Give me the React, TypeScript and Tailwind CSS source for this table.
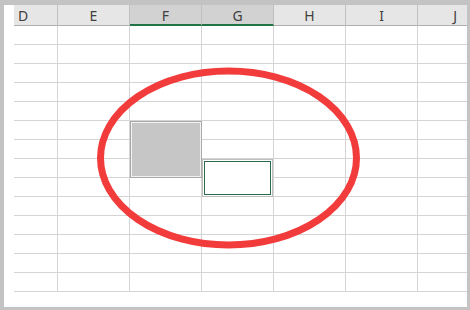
import React from "react";

const cols = [
  { label: "D", w: 44, sel: false, border: true, align: "justify-start pl-[4px]" },
  { label: "E", w: 72, sel: false, border: true, align: "justify-center" },
  { label: "F", w: 72, sel: true, border: true, align: "justify-center" },
  { label: "G", w: 72, sel: true, border: true, align: "justify-center" },
  { label: "H", w: 72, sel: false, border: true, align: "justify-center" },
  { label: "I", w: 72, sel: false, border: true, align: "justify-center" },
  { label: "J", w: 49, sel: false, border: false, align: "justify-end pr-[10px]" },
];

const rows = Array.from({ length: 14 }, (_, i) => i);

export default function App() {
  return (
    <div
      className="w-[470px] h-[310px] bg-[#c3c3c3] pt-[5px] pl-[4px] pr-[3px] pb-[3px] box-border"
      style={{ fontFamily: '"Noto Sans", "Liberation Sans", sans-serif' }}
    >
      <div className="relative w-full h-full bg-white pl-[10px] overflow-hidden">
        <div className="flex flex-col">
          <div className="flex h-[21px]">
            {cols.map((c) => (
              <div
                key={c.label}
                style={{ width: c.w }}
                className={`h-[21px] box-border flex items-center text-[14px] leading-none text-[#404040] shrink-0 ${c.align} ${
                  c.sel
                    ? "bg-[#d2d2d2] border-b-2 border-b-[#217346]"
                    : "bg-[#e6e6e6] border-b border-b-[#b0b0b0]"
                } ${c.border ? "border-r border-r-[#c0c0c0]" : ""}`}
              >
                <span className={c.sel ? "mt-[2px]" : "mt-[1px]"}>{c.label}</span>
              </div>
            ))}
          </div>
          {rows.map((r) => (
            <div key={r} className="flex h-[19px]">
              {cols.map((c) => (
                <div
                  key={c.label}
                  style={{ width: c.w }}
                  className={`h-[19px] box-border shrink-0 border-b border-b-[#d4d4d4] ${
                    c.border ? "border-r border-r-[#d4d4d4]" : ""
                  }`}
                />
              ))}
            </div>
          ))}
        </div>

        <div className="absolute left-[126px] top-[116px] w-[72px] h-[57px] box-border border border-[#a8a8a8] bg-[#c6c6c6] shadow-[inset_0_0_0_1px_#f2f2f2]" />

        <div className="absolute left-[198px] top-[154px] w-[71px] h-[38px] box-border border border-[#bdbdbd] bg-white p-[1px]">
          <div className="w-full h-full box-border border-[1.5px] border-[#2d6a4b]" />
        </div>

        <svg
          className="absolute left-0 top-0"
          width="463"
          height="302"
          viewBox="0 0 463 302"
        >
          <ellipse
            cx="224.5"
            cy="153"
            rx="128"
            ry="87"
            fill="none"
            stroke="#f23b3b"
            strokeWidth="7"
          />
        </svg>
      </div>
    </div>
  );
}
